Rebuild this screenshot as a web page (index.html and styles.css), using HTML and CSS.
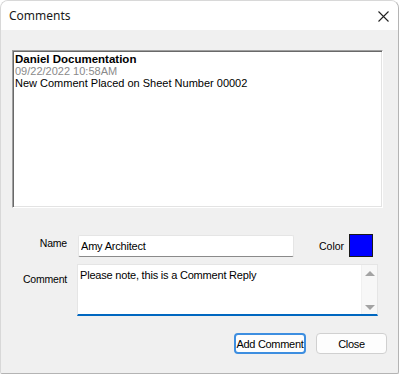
FILE: index.html
```html
<!DOCTYPE html>
<html lang="en">
<head>
    <meta charset="UTF-8">
    <title>Comments</title>
    <link rel="stylesheet" href="styles.css">
</head>
<body>

    <div class="window">

        <div class="title-bar">
            <span class="title">Comments</span>
            <svg class="close-icon" width="11" height="11" viewBox="0 0 11 11">
                <path d="M0.5 0.5 L10.5 10.5 M10.5 0.5 L0.5 10.5" stroke="#222" stroke-width="1.1" fill="none"/>
            </svg>
        </div>

        <div class="dialog-body">

            <div class="comment-list">
                <div class="comment-author">Daniel Documentation</div>
                <div class="comment-date">09/22/2022 10:58AM</div>
                <div class="comment-text">New Comment Placed on Sheet Number 00002</div>
            </div>

            <div class="form-row name-row">
                <label class="field-label name-label">Name</label>
                <input class="name-input" type="text" value="Amy Architect">
                <span class="color-label">Color</span>
                <div class="color-swatch"></div>
            </div>

            <div class="form-row comment-row">
                <label class="field-label comment-label">Comment</label>
                <div class="comment-box">
                    <div class="comment-input">Please note, this is a Comment Reply</div>
                    <div class="scrollbar">
                        <span class="arrow-up"></span>
                        <span class="arrow-down"></span>
                    </div>
                </div>
            </div>

            <div class="button-row">
                <button class="btn btn-default">Add Comment</button>
                <button class="btn btn-close">Close</button>
            </div>

        </div>

    </div>

</body>
</html>
```

FILE: styles.css
```css
body {
    margin: 0;
    padding: 0;
    background-color: #ffffff;
    font-family: "Liberation Sans", Arial, sans-serif;
    font-size: 11px;
    color: #000;
}

.window {
    width: 397px;
    height: 372px;
    border: 1px solid #b4b4b4;
    border-top-color: #d8d8d8;
    border-left-color: #d8d8d8;
    border-radius: 8px 8px 2px 2px;
    overflow: hidden;
    background-color: #f0f0f0;
    display: flex;
    flex-direction: column;
}

.title-bar {
    height: 29px;
    background-color: #ffffff;
    display: flex;
    align-items: center;
    justify-content: space-between;
    padding: 0 9px 0 8px;
}

.title {
    font-family: "Noto Sans", sans-serif;
    font-size: 12px;
    color: #1a1a1a;
}

.close-icon {
    margin-top: 1px;
}

.dialog-body {
    flex: 1;
    padding: 20px 0 0 11px;
}

.comment-list {
    width: 367px;
    height: 154px;
    background-color: #ffffff;
    border-top: 1px solid #a0a0a0;
    border-left: 1px solid #a0a0a0;
    border-right: 1px solid #ffffff;
    border-bottom: 1px solid #ffffff;
    box-shadow: inset 1px 1px 0 #696969, inset -1px -1px 0 #e3e3e3;
    padding: 2px 0 0 2px;
    line-height: 12px;
}

.comment-author {
    font-weight: bold;
    font-size: 11.5px;
}

.comment-date {
    color: #8a8a8a;
}

.form-row {
    display: flex;
}

.field-label {
    width: 55px;
    text-align: right;
    flex-shrink: 0;
    font-size: 10.5px;
    letter-spacing: -0.2px;
}

.name-label {
    padding-bottom: 5px;
}

.name-row {
    margin-top: 26px;
    align-items: center;
    height: 23px;
}

.name-input {
    margin-left: 11px;
    width: 216px;
    height: 22px;
    box-sizing: border-box;
    border: 1px solid #e5e5e5;
    border-bottom-color: #8a8a8a;
    border-radius: 2px;
    padding: 0 2px;
    font-family: "Liberation Sans", Arial, sans-serif;
    font-size: 11px;
    letter-spacing: -0.2px;
    background-color: #ffffff;
    outline: none;
}

.color-label {
    margin-left: 25px;
    font-size: 10.5px;
}

.color-swatch {
    margin-left: 5px;
    width: 22px;
    height: 21px;
    background-color: #0000ff;
    border: 1px solid #1a1a1a;
}

.comment-row {
    margin-top: 7px;
}

.comment-label {
    padding-top: 9px;
}

.comment-box {
    margin-left: 10px;
    width: 301px;
    height: 52px;
    box-sizing: border-box;
    background-color: #ffffff;
    border: 1px solid #e5e5e5;
    border-bottom: 2px solid #0067c0;
    display: flex;
}

.comment-input {
    flex: 1;
    padding: 4px 2px;
    letter-spacing: -0.2px;
}

.scrollbar {
    width: 15px;
    background-color: #f7f7f7;
    border-left: 1px solid #f0f0f0;
    display: flex;
    flex-direction: column;
    justify-content: space-between;
    align-items: center;
    padding: 6px 0 4px;
}

.arrow-up {
    width: 0;
    height: 0;
    border-left: 5px solid transparent;
    border-right: 5px solid transparent;
    border-bottom: 5px solid #a3a3a3;
}

.arrow-down {
    width: 0;
    height: 0;
    border-left: 5px solid transparent;
    border-right: 5px solid transparent;
    border-top: 5px solid #a3a3a3;
}

.button-row {
    display: flex;
    justify-content: flex-end;
    gap: 10px;
    margin-top: 17px;
    padding-right: 11px;
}

.btn {
    height: 21px;
    box-sizing: border-box;
    background-color: #fdfdfd;
    border: 1px solid #d0d0d0;
    border-radius: 4px;
    font-family: "Liberation Sans", Arial, sans-serif;
    font-size: 11px;
    letter-spacing: -0.3px;
    color: #000;
    padding: 0;
    white-space: nowrap;
    overflow: hidden;
}

.btn-default {
    width: 72px;
    border: 2px solid #3d8ee0;
}

.btn-close {
    width: 71px;
}
```
